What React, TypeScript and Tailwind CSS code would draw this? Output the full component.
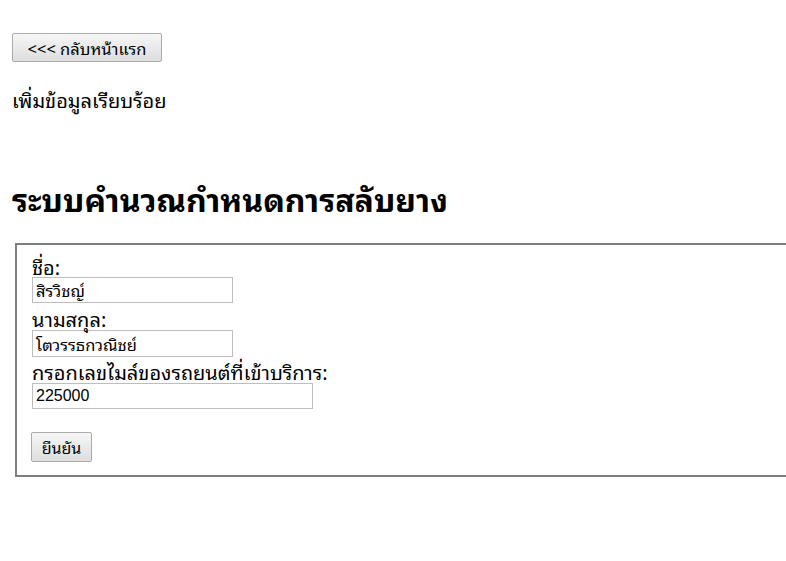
export default function App() {
  const font = { fontFamily: 'Tahoma, "Noto Sans Thai Looped", "Noto Serif Thai", "Noto Sans Thai", sans-serif' };
  return (
    <div className="min-h-[561px] bg-white text-black px-3 pt-[33px]" style={font}>
      <button className="h-[29px] w-[150px] border border-[#aaaaaa] rounded-[2px] bg-gradient-to-b from-[#f6f6f6] to-[#dedede] text-[16.5px] leading-[20px] text-black flex items-center justify-center">
        &lt;&lt;&lt; กลับหน้าแรก
      </button>
      <p className="mt-[25px] text-[20px] leading-[24px]">เพิ่มข้อมูลเรียบร้อย</p>
      <h1 className="mt-[70px] text-[32px] font-bold leading-[34px]">ระบบคำนวณกำหนดการสลับยาง</h1>
      <div className="mt-[28px] ml-[3px] w-[800px] h-[234px] border-2 border-[#7f7f7f] pl-[15px] pt-[11px]">
        <div className="text-[20px] leading-[20px]">ชื่อ:</div>
        <div className="mt-[1px] w-[201px] h-[26px] border border-[#bdbdbd] px-[3px] flex items-center text-[16.5px] leading-[16px]">สิรวิชญ์</div>
        <div className="mt-[4px] text-[20px] leading-[22px]">นามสกุล:</div>
        <div className="mt-[1px] w-[201px] h-[27px] border border-[#bdbdbd] px-[3px] flex items-center text-[16.5px] leading-[16px]">โตวรรธกวณิชย์</div>
        <div className="mt-[3px] text-[20px] leading-[22px]">กรอกเลขไมล์ของรถยนต์ที่เข้าบริการ:</div>
        <div className="mt-[1px] w-[281px] h-[26px] border border-[#bdbdbd] px-[3px] flex items-center text-[16px]" style={{ fontFamily: '"Liberation Sans", Arial, sans-serif' }}>225000</div>
        <button className="mt-[23px] -ml-[1px] h-[30px] w-[61px] border border-[#aaaaaa] rounded-[2px] bg-gradient-to-b from-[#f6f6f6] to-[#dedede] text-[16px] leading-[20px] text-black flex items-center justify-center">
          ยืนยัน
        </button>
      </div>
    </div>
  );
}
